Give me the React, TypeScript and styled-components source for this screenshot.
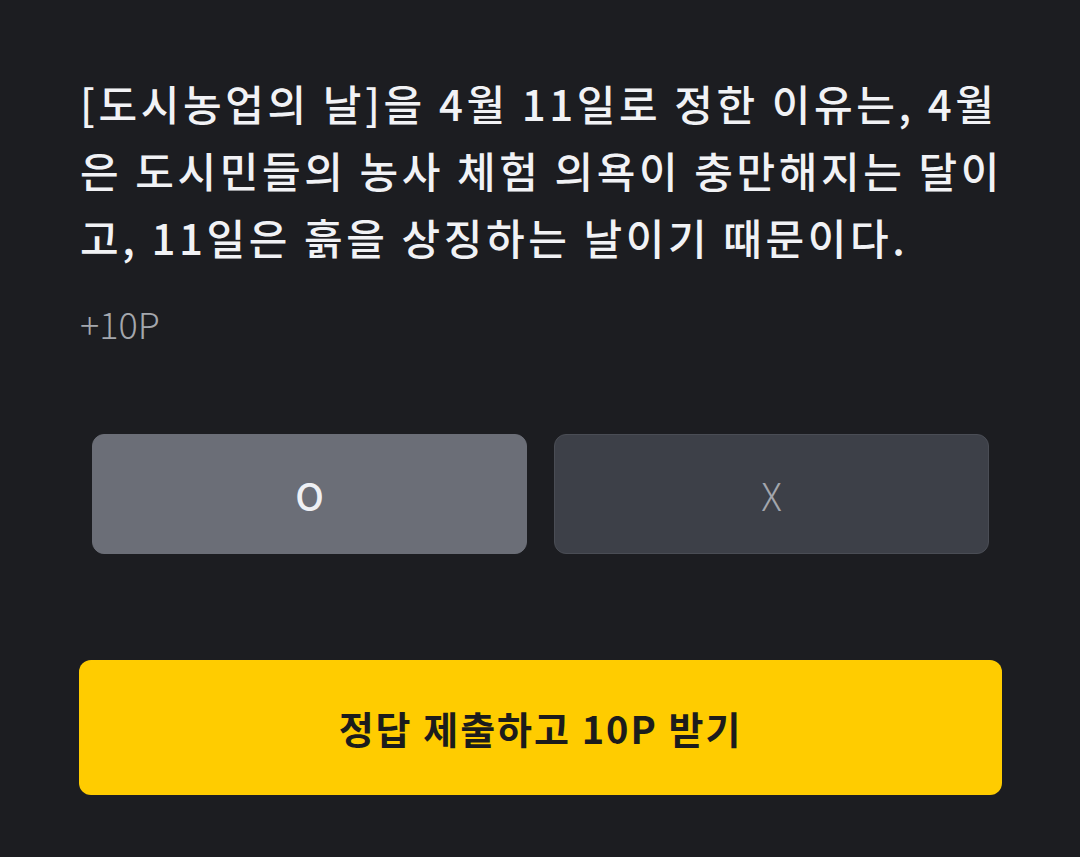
import React from 'react';
import styled, { createGlobalStyle } from 'styled-components';

const GlobalStyle = createGlobalStyle`
    html, body {
        margin: 0;
        padding: 0;
        background: #1c1d21;
    }
    body {
        font-family: 'Noto Sans CJK KR', 'Noto Sans', sans-serif;
    }
`;

const Page = styled.div`
    width: 1080px;
    height: 857px;
    box-sizing: border-box;
    padding: 69px 78px 0 80px;
    background: #1c1d21;
    display: flex;
    flex-direction: column;
`;

const Question = styled.h1`
    margin: 0 -4px 0 0;
    font-size: 42px;
    line-height: 67px;
    font-weight: 500;
    color: #f1f2f5;
    letter-spacing: 3.6px;
    word-break: break-all;
`;

const Reward = styled.div`
    margin-top: 31px;
    font-size: 36px;
    line-height: 44px;
    font-weight: 300;
    color: #a4a7ad;
`;

const Choices = styled.div`
    margin-top: 89px;
    padding: 0 13px 0 12px;
    display: grid;
    grid-template-columns: 1fr 1fr;
    gap: 27px;
`;

const Choice = styled.button<{ $selected?: boolean }>`
    height: 120px;
    border-radius: 12px;
    box-sizing: border-box;
    font-family: inherit;
    font-size: 38px;
    cursor: pointer;
    border: 1px solid ${(p) => (p.$selected ? '#6b6e77' : '#4a4d55')};
    background: ${(p) => (p.$selected ? '#6b6e77' : '#3d4048')};
    color: ${(p) => (p.$selected ? '#eef0f4' : '#a3a6ad')};
    font-weight: ${(p) => (p.$selected ? 500 : 300)};
`;

const Submit = styled.button`
    margin-top: 106px;
    margin-left: -1px;
    height: 135px;
    border: none;
    border-radius: 12px;
    background: #ffcc00;
    color: #1c1c1c;
    font-family: inherit;
    font-size: 38px;
    font-weight: 700;
    letter-spacing: 2px;
    cursor: pointer;
`;

const App: React.FC = (): JSX.Element => {
    return (
        <Page>
            <GlobalStyle />
            <Question>
                [도시농업의 날]을 4월 11일로 정한 이유는, 4월은 도시민들의 농사 체험 의욕이 충만해지는 달이고, 11일은 흙을 상징하는 날이기 때문이다.
            </Question>
            <Reward>+10P</Reward>
            <Choices>
                <Choice $selected>O</Choice>
                <Choice>X</Choice>
            </Choices>
            <Submit>정답 제출하고 10P 받기</Submit>
        </Page>
    );
};

export default App;
